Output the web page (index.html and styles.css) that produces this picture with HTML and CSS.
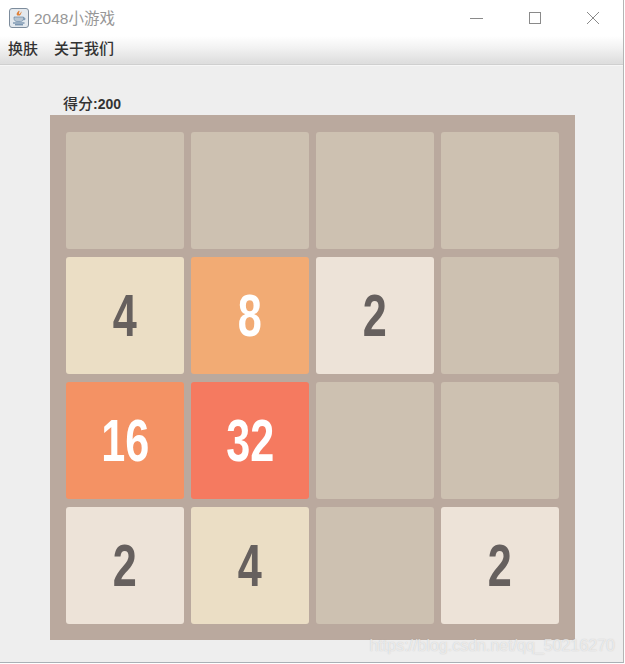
FILE: index.html
```html
<!DOCTYPE html>
<html lang="zh">
<head>
<meta charset="utf-8">
<title>2048小游戏</title>
<link rel="stylesheet" href="styles.css">
</head>
<body>
<div class="window">
  <header class="titlebar">
    <svg class="app-icon" viewBox="0 0 20 20" aria-hidden="true">
      <rect x="0.5" y="0.5" width="19" height="19" rx="2.5" fill="#e4e9ee" stroke="#7d8c9c"/>
      <path d="M10 2.500c1.600 1.400-1 2.400 0.400 3.600 1.300-.9 1-1.800 2.600-2.600-1 1.400-.8 3-2.300 4h-2.400c-1.500-1.300-.4-2.800 1.700-5z" fill="#e0823a"/>
      <path d="M5 9h9.500v1.500c0 2-1.500 3-3 3h-3.500c-1.500 0-3-1-3-3z" fill="#b9c6d2" stroke="#5b7da0" stroke-width=".6"/>
      <path d="M14.500 10h1.300v1.700h-1.500" fill="none" stroke="#5b7da0" stroke-width=".8"/>
      <path d="M4 15h11.500M6 16.800h8" stroke="#4f7396" stroke-width="1"/>
    </svg>
    <span class="app-title">2048小游戏</span>
    <div class="controls">
      <svg class="ctl" viewBox="0 0 58 24" aria-hidden="true"><path d="M22 9.500h13" stroke="#8a8a8a" fill="none"/></svg>
      <svg class="ctl" viewBox="0 0 58 24" aria-hidden="true"><rect x="23.500" y="3.500" width="11" height="11" stroke="#8a8a8a" fill="none"/></svg>
      <svg class="ctl" viewBox="0 0 58 24" aria-hidden="true"><path d="M23 3l12 12M35 3L23 15" stroke="#8a8a8a" fill="none"/></svg>
    </div>
  </header>
  <nav class="menubar">
    <span class="menu-item">换肤</span>
    <span class="menu-item">关于我们</span>
  </nav>
  <main class="content">
    <div class="score">得分<b>:200</b></div>
    <div class="board">
      <div class="tile"></div>
      <div class="tile"></div>
      <div class="tile"></div>
      <div class="tile"></div>
      <div class="tile t4"><span class="num">4</span></div>
      <div class="tile t8"><span class="num">8</span></div>
      <div class="tile t2"><span class="num">2</span></div>
      <div class="tile"></div>
      <div class="tile t16"><span class="num">16</span></div>
      <div class="tile t32"><span class="num">32</span></div>
      <div class="tile"></div>
      <div class="tile"></div>
      <div class="tile t2"><span class="num">2</span></div>
      <div class="tile t4"><span class="num">4</span></div>
      <div class="tile"></div>
      <div class="tile t2"><span class="num">2</span></div>
    </div>
  </main>
  <div class="watermark">https://blog.csdn.net/qq_50216270</div>
</div>
</body>
</html>
```
FILE: styles.css
```css
* { box-sizing: border-box; }
html, body { margin: 0; padding: 0; background: #fff; }
body {
  width: 625px;
  height: 664px;
  overflow: hidden;
  font-family: "Liberation Sans", "Noto Sans CJK SC", sans-serif;
}
.window {
  position: relative;
  width: 624px;
  height: 663px;
  background: #eeeeee;
  border-right: 1px solid #b5b5b5;
  border-bottom: 1px solid #a9b0b5;
  display: flex;
  flex-direction: column;
}
.titlebar {
  height: 36px;
  flex: none;
  background: #fff;
  display: flex;
  align-items: center;
  padding-left: 9px;
}
.app-icon { width: 20px; height: 20px; flex: none; margin-top: -1px; }
.app-title {
  margin: -2px 0 0 5px;
  font-size: 15.5px;
  color: #979797;
}
.controls { margin: 6px 1px 0 auto; display: flex; }
.ctl { width: 58px; height: 24px; flex: none; display: block; }
.menubar {
  height: 29px;
  flex: none;
  display: flex;
  align-items: flex-start;
  gap: 16px;
  padding: 3px 0 0 8px;
  background: linear-gradient(#ffffff 0%, #f3f3f3 40%, #dedede 95%);
  border-bottom: 1px solid #cfcfcf;
  font-size: 15px;
  line-height: 20px;
  font-weight: 500;
  color: #333;
}
.content {
  flex: 1;
  padding: 29px 0 0 50px;
  border-top: 1px solid #f6f6f6;
}
.score {
  margin-left: 13px;
  height: 20px;
  font-size: 15px;
  line-height: 18px;
  font-weight: 500;
  color: #333;
}
.score b { font-size: 14px; }
.board {
  width: 525px;
  height: 525px;
  background: #baa99e;
  padding: 17px 16px;
  display: grid;
  grid-template-columns: repeat(4, 118px);
  grid-auto-rows: 117px;
  column-gap: 7px;
  row-gap: 8px;
}
.tile {
  background: #cdc1b1;
  border-radius: 3px;
  display: flex;
  align-items: center;
  justify-content: center;
  font-weight: bold;
  font-size: 60px;
  line-height: 1;
  color: #66605e;
}
.num { display: block; transform: scaleX(0.72); }
.t2 { background: #ede3d8; }
.t4 { background: #ebdec5; }
.t8 { background: #f2ab74; color: #fff; }
.t16 { background: #f49264; color: #fff; }
.t32 { background: #f57a60; color: #fff; }
.watermark {
  position: absolute;
  right: 8px;
  bottom: 7px;
  font-size: 16px;
  color: rgba(255, 255, 255, 0.62);
  text-shadow: 0 0 1px rgba(150, 150, 150, 0.5);
}
```
